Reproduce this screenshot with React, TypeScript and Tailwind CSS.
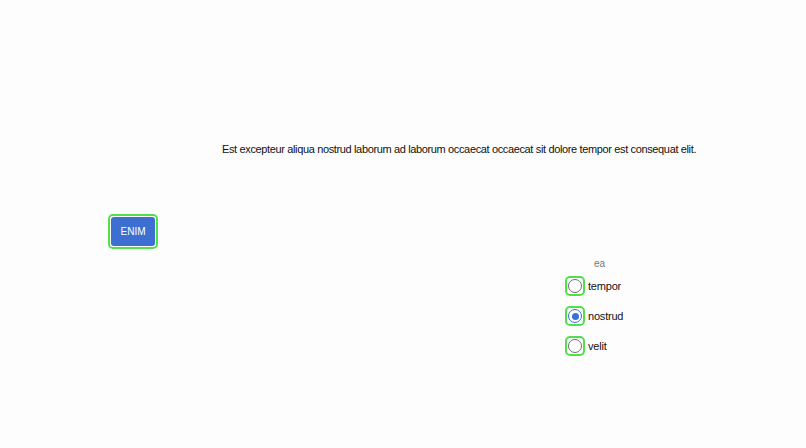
import React from "react";

function Radio({ label, checked }: { label: string; checked?: boolean }) {
  return (
    <div className="flex items-center h-[30px]">
      <div className="w-[20px] h-[20px] rounded-[5px] border-2 border-[#52e04a] flex items-center justify-center">
        {checked ? (
          <div className="w-[14px] h-[14px] rounded-full border-[1.5px] border-[#3a6fd8] flex items-center justify-center bg-white">
            <div className="w-[7px] h-[7px] rounded-full bg-[#3a6fd8]" />
          </div>
        ) : (
          <div className="w-[14px] h-[14px] rounded-full border-[1.5px] border-[#6e6e6e] bg-white" />
        )}
      </div>
      <span className="ml-[3px] text-[11px] tracking-[-0.2px] text-[#111]">{label}</span>
    </div>
  );
}

export default function App() {
  return (
    <div
      className="w-[806px] h-[448px] bg-[#fdfdfd] flex flex-col"
      style={{ fontFamily: '"Liberation Sans", Arial, sans-serif' }}
    >
      <p className="mt-[141px] ml-[222px] text-[11px] leading-[16px] tracking-[-0.36px] text-[#111]">
        Est excepteur aliqua nostrud laborum ad laborum occaecat occaecat sit dolore tempor est consequat elit.
      </p>
      <div className="mt-[57px] ml-[108px] w-[50px] h-[35px] rounded-[5px] border-2 border-[#52e04a] p-[1px]">
        <button className="w-full h-full rounded-[3px] bg-[#3d6fd1] text-white text-[10px] flex items-center justify-center">
          ENIM
        </button>
      </div>
      <div className="mt-[8px] ml-[565px] flex flex-col">
        <div className="text-[10px] text-[#777] h-[14px] leading-[14px] pl-[29px]">ea</div>
        <div className="flex flex-col">
          <Radio label="tempor" />
          <Radio label="nostrud" checked />
          <Radio label="velit" />
        </div>
      </div>
    </div>
  );
}
